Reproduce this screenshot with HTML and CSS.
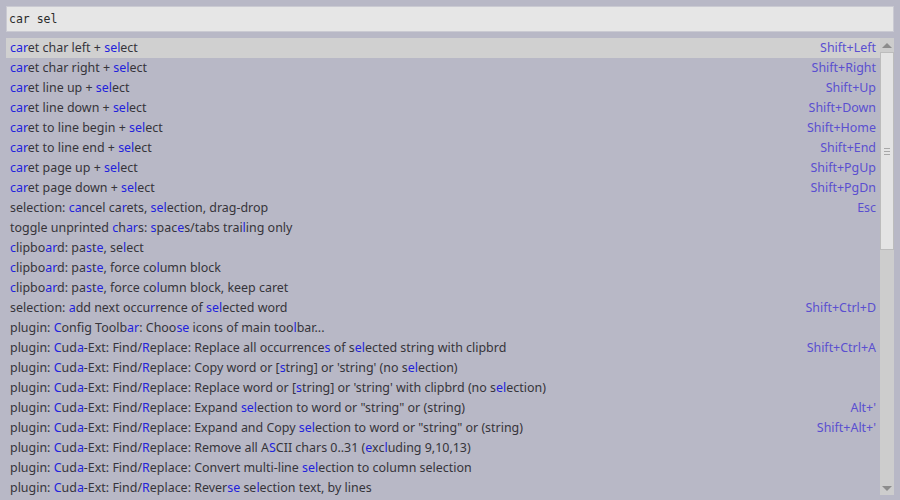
FILE: index.html
```html
<!DOCTYPE html>
<html>
<head>
<meta charset="utf-8">
<link rel="stylesheet" href="styles.css">
</head>
<body>
<div class="wrap">
  <div class="input">car sel</div>
  <div class="panel">
    <div class="list">
      <div class="row sel"><span class="t"><b>car</b>et char left + <b>sel</b>ect</span><span class="k">Shift+Left</span></div>
      <div class="row"><span class="t"><b>car</b>et char right + <b>sel</b>ect</span><span class="k">Shift+Right</span></div>
      <div class="row"><span class="t"><b>car</b>et line up + <b>sel</b>ect</span><span class="k">Shift+Up</span></div>
      <div class="row"><span class="t"><b>car</b>et line down + <b>sel</b>ect</span><span class="k">Shift+Down</span></div>
      <div class="row"><span class="t"><b>car</b>et to line begin + <b>sel</b>ect</span><span class="k">Shift+Home</span></div>
      <div class="row"><span class="t"><b>car</b>et to line end + <b>sel</b>ect</span><span class="k">Shift+End</span></div>
      <div class="row"><span class="t"><b>car</b>et page up + <b>sel</b>ect</span><span class="k">Shift+PgUp</span></div>
      <div class="row"><span class="t"><b>car</b>et page down + <b>sel</b>ect</span><span class="k">Shift+PgDn</span></div>
      <div class="row"><span class="t">selection: <b>ca</b>ncel ca<b>r</b>ets, <b>sel</b>ection, drag-drop</span><span class="k">Esc</span></div>
      <div class="row"><span class="t">toggle unprinted <b>c</b>h<b>ar</b>s: <b>s</b>pac<b>e</b>s/tabs trai<b>l</b>ing only</span></div>
      <div class="row"><span class="t"><b>c</b>lipbo<b>ar</b>d: pa<b>s</b>t<b>e</b>, se<b>l</b>ect</span></div>
      <div class="row"><span class="t"><b>c</b>lipbo<b>ar</b>d: pa<b>s</b>t<b>e</b>, force co<b>l</b>umn block</span></div>
      <div class="row"><span class="t"><b>c</b>lipbo<b>ar</b>d: pa<b>s</b>t<b>e</b>, force co<b>l</b>umn block, keep caret</span></div>
      <div class="row"><span class="t">selection: <b>a</b>dd next occu<b>r</b>rence of <b>sel</b>ected word</span><span class="k">Shift+Ctrl+D</span></div>
      <div class="row"><span class="t">plugin: <b>C</b>onfig Toolb<b>ar</b>: Choo<b>se</b> icons of main too<b>l</b>bar...</span></div>
      <div class="row"><span class="t">plugin: <b>C</b>ud<b>a</b>-Ext: Find/<b>R</b>eplace: Replace all occurrence<b>s</b> of s<b>el</b>ected string with clipbrd</span><span class="k">Shift+Ctrl+A</span></div>
      <div class="row"><span class="t">plugin: <b>C</b>ud<b>a</b>-Ext: Find/<b>R</b>eplace: Copy word or [<b>s</b>tring] or 'string' (no s<b>el</b>ection)</span></div>
      <div class="row"><span class="t">plugin: <b>C</b>ud<b>a</b>-Ext: Find/<b>R</b>eplace: Replace word or [<b>s</b>tring] or 'string' with clipbrd (no s<b>el</b>ection)</span></div>
      <div class="row"><span class="t">plugin: <b>C</b>ud<b>a</b>-Ext: Find/<b>R</b>eplace: Expand <b>sel</b>ection to word or "string" or (string)</span><span class="k">Alt+'</span></div>
      <div class="row"><span class="t">plugin: <b>C</b>ud<b>a</b>-Ext: Find/<b>R</b>eplace: Expand and Copy <b>sel</b>ection to word or "string" or (string)</span><span class="k">Shift+Alt+'</span></div>
      <div class="row"><span class="t">plugin: <b>C</b>ud<b>a</b>-Ext: Find/<b>R</b>eplace: Remove all A<b>S</b>CII chars 0..31 (<b>e</b>xc<b>l</b>uding 9,10,13)</span></div>
      <div class="row"><span class="t">plugin: <b>C</b>ud<b>a</b>-Ext: Find/<b>R</b>eplace: Convert multi-line <b>sel</b>ection to column selection</span></div>
      <div class="row"><span class="t">plugin: <b>C</b>ud<b>a</b>-Ext: Find/<b>R</b>eplace: Rever<b>se</b> se<b>l</b>ection text, by lines</span></div>
    </div>
    <div class="scroll">
      <div class="arrow up"></div>
      <div class="thumb"><span class="grip"></span></div>
      <div class="track"></div>
      <div class="arrow down"></div>
    </div>
  </div>
</div>
</body>
</html>
```
FILE: styles.css
```css
html, body {
  margin: 0;
  padding: 0;
  background: #b8b8c6;
  width: 900px;
  height: 500px;
  overflow: hidden;
}
.wrap {
  padding: 6px 6px 0 6px;
}
.input {
  box-sizing: border-box;
  height: 26px;
  border: 1px solid #cacad2;
  background: #e6e6e6;
  font-family: "DejaVu Sans Mono", monospace;
  font-size: 11.5px;
  line-height: 24px;
  padding-left: 2px;
  color: #2a2a2a;
}
.panel {
  margin-top: 6px;
  display: flex;
  height: 457px;
}
.list {
  flex: 1;
  font-family: "Noto Sans", sans-serif;
  font-size: 12.45px;
  color: #36343a;
}
.row {
  height: 20px;
  line-height: 20px;
  display: flex;
  justify-content: space-between;
  padding: 0 4px;
  white-space: nowrap;
}
.row.sel {
  background: #d0d0d0;
}
.row b {
  font-weight: normal;
  color: #2222dc;
}
.k {
  color: #5a4fd0;
}
.scroll {
  width: 14px;
  display: flex;
  flex-direction: column;
  background: #cdcdcd;
}
.arrow {
  height: 14px;
  display: flex;
  align-items: center;
  justify-content: center;
}
.arrow::before {
  content: "";
  width: 0;
  height: 0;
  border-left: 5px solid transparent;
  border-right: 5px solid transparent;
}
.arrow.up::before {
  border-bottom: 5px solid #8c8c8c;
}
.arrow.down::before {
  border-top: 5px solid #8c8c8c;
}
.thumb {
  height: 198px;
  box-sizing: border-box;
  border: 1px solid #bcbcbc;
  background: #e4e4e4;
  display: flex;
  align-items: center;
  justify-content: center;
}
.grip {
  width: 6px;
  height: 5px;
  border-top: 1px solid #a8a8a8;
  border-bottom: 1px solid #a8a8a8;
  position: relative;
}
.grip::after {
  content: "";
  position: absolute;
  left: 0;
  right: 0;
  top: 2px;
  border-top: 1px solid #a8a8a8;
}
.track {
  flex: 1;
}
```
